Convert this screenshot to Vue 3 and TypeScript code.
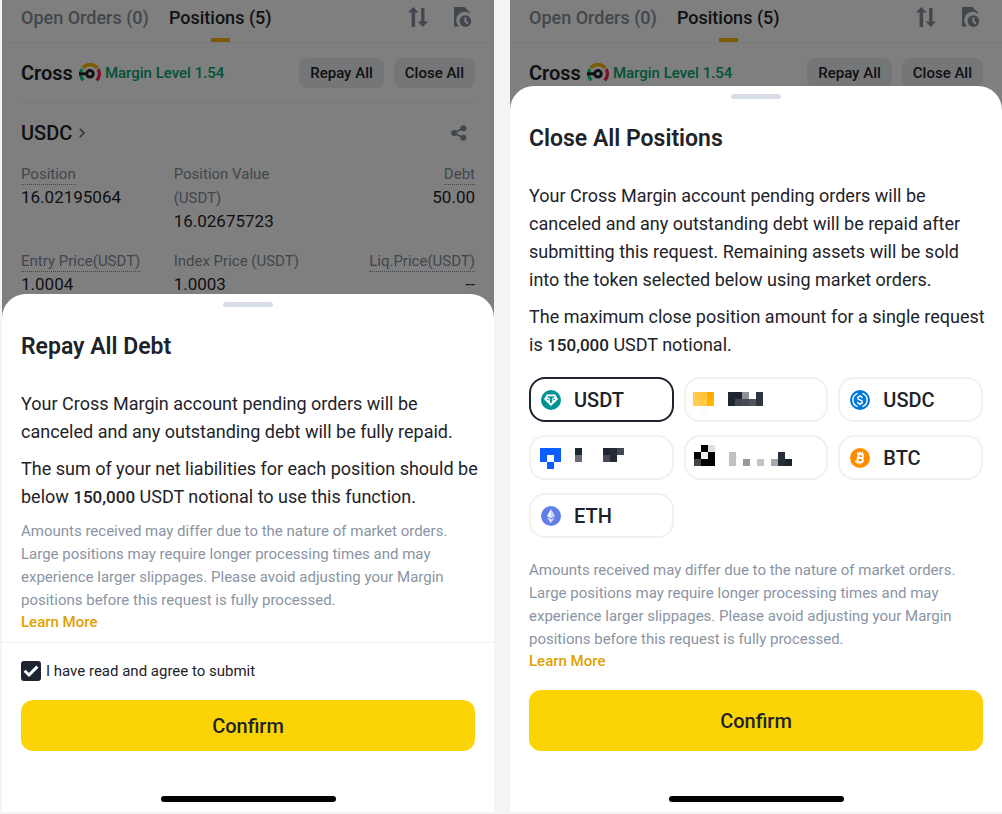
<script setup lang="ts">
import { ref } from 'vue'

type Cell = [x: number, y: number, color: string, w?: number, h?: number]
interface Token {
  id: string
  label: string
  cells?: Cell[]
}
interface Metric {
  label: string
  value: string
  dotted?: boolean
}
interface Sheet {
  kind: 'repay' | 'close'
  title: string
  body: string[][]
}

const metrics: Metric[] = [
  { label: 'Position', value: '16.02195064', dotted: true },
  { label: 'Position Value\n(USDT)', value: '16.02675723' },
  { label: 'Debt', value: '50.00', dotted: true },
  { label: 'Entry Price(USDT)', value: '1.0004', dotted: true },
  { label: 'Index Price (USDT)', value: '1.0003' },
  { label: 'Liq.Price(USDT)', value: '--', dotted: true },
]

// Each body entry is a paragraph, split as [before, amount, after].
const sheets: Sheet[] = [
  {
    kind: 'repay',
    title: 'Repay All Debt',
    body: [
      ['Your Cross Margin account pending orders will be\ncanceled and any outstanding debt will be fully repaid.'],
      ['The sum of your net liabilities for each position should be\nbelow ', '150,000', ' USDT notional to use this function.'],
    ],
  },
  {
    kind: 'close',
    title: 'Close All Positions',
    body: [
      ['Your Cross Margin account pending orders will be\ncanceled and any outstanding debt will be repaid after\nsubmitting this request. Remaining assets will be sold\ninto the token selected below using market orders.'],
      ['The maximum close position amount for a single request\nis ', '150,000', ' USDT notional.'],
    ],
  },
]

const note =
  'Amounts received may differ due to the nature of market orders.\nLarge positions may require longer processing times and may\nexperience larger slippages. Please avoid adjusting your Margin\npositions before this request is fully processed.'

const tokens: Token[] = [
  { id: 'usdt', label: 'USDT' },
  {
    id: 'masked-1',
    label: '',
    cells: [
      [1, 12, '#ffca4b'], [8, 12, '#ffc33c'], [15, 12, '#ffad00'],
      [1, 19, '#ffcd50'], [8, 19, '#ffc946'], [15, 19, '#ffb700'], [8, 26, '#fdfcfa'],
      [36, 12, '#1e2530', 14], [50, 12, '#8f9297'], [64, 12, '#2c333e'],
      [36, 19, '#1e2530'], [43, 19, '#414650'], [50, 19, '#474c54'], [57, 19, '#50545b'], [64, 19, '#2f3640'],
    ],
  },
  { id: 'usdc', label: 'USDC' },
  {
    id: 'masked-2',
    label: '',
    cells: [
      [3, 10, '#0b5fff', 21], [3, 17, '#0b5fff'], [17, 17, '#0b5fff'], [10, 24, '#0b5fff'],
      [38, 10, '#1e2530'], [38, 17, '#666b74'],
      [66, 10, '#1e2530'], [73, 10, '#252c36'], [80, 10, '#434852'],
      [66, 17, '#444953'], [73, 17, '#232a35'],
    ],
  },
  {
    id: 'masked-3',
    label: '',
    cells: [
      [9, 7, '#000'], [16, 7, '#dedfe3'],
      [2, 14, '#000'], [9, 14, '#ececee'], [16, 14, '#000'],
      [2, 21, '#434343'], [9, 21, '#000', 14],
      [37, 14, '#c1c1c5', 7, 14], [51, 21, '#97999d'], [65, 21, '#c3c4c8'], [79, 21, '#a5a8ad'],
      [86, 14, '#262d38', 7, 14], [93, 14, '#fcfcfc'], [93, 21, '#1d2430'],
    ],
  },
  { id: 'btc', label: 'BTC' },
  { id: 'eth', label: 'ETH' },
]

const agreed = ref(true)
const selected = ref('usdt')
</script>

<template>
  <main class="board">
    <section v-for="sheet in sheets" :key="sheet.kind" class="phone">
      <div class="screen">
        <header class="topbar">
          <nav class="tabs">
            <button type="button" class="tab">Open Orders (0)</button>
            <button type="button" class="tab active">Positions (5)</button>
          </nav>
          <div class="tools">
            <button type="button" class="icon-btn" aria-label="Sort">
              <svg width="20" height="20" viewBox="0 0 20 20" fill="currentColor">
                <path d="M5.3 0 10.6 5.4H7.1V20H3.6V5.4H0zM13.2 1h3.3v13.6H20L14.8 20 9.6 14.6h3.6z" />
              </svg>
            </button>
            <button type="button" class="icon-btn" aria-label="Order history">
              <svg width="18" height="20" viewBox="0 0 18 20" fill="currentColor">
                <path d="M0 0h10.4L16 5.6v1.2A7.2 7.2 0 0 0 5.2 19.6H0z" />
                <path fill-rule="evenodd" d="M11.4 8.2a5.9 5.9 0 1 1 0 11.8 5.9 5.9 0 0 1 0-11.8zM10.4 10.6v4.1l2.9 2.7 1.3-1.4-2.2-2.1v-3.3z" />
              </svg>
            </button>
          </div>
        </header>

        <div class="account">
          <strong class="mode">Cross</strong>
          <svg class="gauge" width="22" height="19" viewBox="0 0 22 19" fill="none" stroke-width="3.4">
            <path d="M4.4 17.4A9.3 9.3 0 0 1 2.9 6.2" stroke="#0ecb81" />
            <path d="M3.7 5.1A9.3 9.3 0 0 1 18.3 5.1" stroke="#fcb500" />
            <path d="M19.1 6.2A9.3 9.3 0 0 1 17.6 17.4" stroke="#f6254f" />
            <path d="M0 10.8h8" stroke="#1e2329" stroke-width="3" />
            <circle cx="11" cy="10.8" r="3.3" stroke="#1e2329" stroke-width="3" />
          </svg>
          <span class="level">Margin Level 1.54</span>
          <button type="button" class="pill">Repay All</button>
          <button type="button" class="pill">Close All</button>
        </div>

        <div class="asset">
          <button type="button" class="asset-name">
            USDC
            <svg width="6" height="10" viewBox="0 0 6 10" fill="none" stroke="#707a8a" stroke-width="1.8"><path d="M.8.8 5 5 .8 9.2" /></svg>
          </button>
          <button type="button" class="icon-btn" aria-label="Share">
            <svg width="16" height="16" viewBox="0 0 16 16" fill="currentColor">
              <path d="M3 8 12.5 3M3 8l9.5 5" stroke="currentColor" stroke-width="1.8" />
              <circle cx="3.2" cy="8" r="3" /><circle cx="12.4" cy="3.3" r="3" /><circle cx="12.4" cy="12.7" r="3" />
            </svg>
          </button>
        </div>

        <dl v-if="sheet.kind === 'repay'" class="metrics">
          <div v-for="m in metrics" :key="m.label" class="metric">
            <dt><span :class="{ dotted: m.dotted }">{{ m.label }}</span></dt>
            <dd>{{ m.value }}</dd>
          </div>
        </dl>
      </div>

      <div class="scrim"></div>

      <div class="sheet" role="dialog" :aria-label="sheet.title">
        <span class="handle"></span>
        <h2>{{ sheet.title }}</h2>
        <p v-for="(parts, i) in sheet.body" :key="i" class="copy">{{ parts[0] }}<b v-if="parts[1]">{{ parts[1] }}</b>{{ parts[2] }}</p>

        <fieldset v-if="sheet.kind === 'close'" class="tokens" aria-label="Token">
          <label v-for="t in tokens" :key="t.id" class="token" :class="{ on: selected === t.id, masked: t.cells }">
            <input v-model="selected" type="radio" name="token" :value="t.id" :aria-label="t.label || 'Hidden token'" />
            <svg v-if="t.cells" width="112" height="40" viewBox="0 0 112 40" shape-rendering="crispEdges">
              <rect v-for="(c, i) in t.cells" :key="i" :x="c[0]" :y="c[1]" :fill="c[2]" :width="c[3] ?? 7" :height="c[4] ?? 7" />
            </svg>
            <svg v-else-if="t.id === 'usdt'" width="20" height="20" viewBox="0 0 20 20">
              <circle cx="10" cy="10" r="10" fill="#009393" />
              <path d="M5.8 4.6h8.4L17 9.2l-7 6.9L3 9.2z" fill="#fff" />
              <path d="M6.8 6.2h6.4v1.6h-2.3v.8c2 .1 3.2.5 3.2.9s-1.2.8-3.2.9v2.7H9.1v-2.7c-2-.1-3.2-.5-3.2-.9s1.2-.8 3.2-.9v-.8H6.8z" fill="#009393" />
              <path d="M6.8 9.5c1.5-.6 4.900-.6 6.400 0-1.500.5-4.900.5-6.400 0z" fill="#fff" />
              <path d="M9.100 7.500h1.800v2.600H9.100z" fill="#009393" />
            </svg>
            <svg v-else-if="t.id === 'usdc'" width="20" height="20" viewBox="0 0 20 20" fill="none" stroke="#fff">
              <circle cx="10" cy="10" r="10" fill="#0078d6" stroke="none" />
              <path d="M7.6 3.4a7 7 0 0 0 0 13.2M12.4 3.4a7 7 0 0 1 0 13.2" stroke-width="1.4" />
              <path d="M12.3 8.1c-.1-1.1-1-1.7-2.3-1.7s-2.3.6-2.3 1.7c0 2.6 4.7 1.2 4.7 3.8 0 1.1-1 1.8-2.4 1.8s-2.4-.7-2.5-1.9M10 4.9v1.6M10 13.6v1.6" stroke-width="1.4" />
            </svg>
            <svg v-else-if="t.id === 'btc'" width="20" height="20" viewBox="0 0 20 20" fill="none" stroke="#fff">
              <circle cx="10" cy="10" r="10" fill="#ff8d00" stroke="none" />
              <g transform="rotate(13 10 10)" stroke-width="1.9">
                <path d="M6 6h4.800a1.900 1.900 0 0 1 0 3.900H8M10.500 9.900h.8a2.100 2.100 0 0 1 0 4.200H6M8 6v8" />
                <path d="M8.800 3.600V6M11.200 3.600V6M8.800 14v2.400M11.200 14v2.400" stroke-width="1.3" />
              </g>
            </svg>
            <svg v-else width="20" height="20" viewBox="0 0 20 20">
              <circle cx="10" cy="10" r="10" fill="#627eea" />
              <path d="M10 3 5.9 10.1 10 12.4z" fill="#f0f2fd" />
              <path d="M10 3l4.1 7.1L10 12.4z" fill="#cbd4f8" />
              <path d="M5.9 11.3 10 17v-3.4z" fill="#f0f2fd" />
              <path d="M14.1 11.3 10 17v-3.4z" fill="#cbd4f8" />
            </svg>
            <span v-if="t.label">{{ t.label }}</span>
          </label>
        </fieldset>

        <p class="note">{{ note }}</p>
        <a href="#" class="more">Learn More</a>

        <label v-if="sheet.kind === 'repay'" class="agree">
          <span class="box">
            <input v-model="agreed" type="checkbox" />
            <svg v-if="agreed" width="20" height="20" viewBox="0 0 20 20" fill="none" stroke="#fff" stroke-width="3"><path d="M3.6 9.7 8 14l8.4-8.4" /></svg>
          </span>
          I have read and agree to submit
        </label>

        <button type="button" class="confirm" :class="sheet.kind">Confirm</button>
        <span class="home"></span>
      </div>
    </section>
  </main>
</template>

<style>
body {
  margin: 0;
  background: #f4f4f4;
}
</style>

<style scoped>
.board {
  box-sizing: border-box;
  display: grid;
  grid-template-columns: 1fr 1fr;
  gap: 16px;
  min-height: 100vh;
  padding: 0 0 2px 2px;
  font-family: Roboto, "Liberation Sans", sans-serif;
  color: #1e2329;
}
button {
  padding: 0;
  border: 0;
  background: none;
  color: inherit;
  font: inherit;
  cursor: pointer;
}
svg {
  display: block;
  flex: none;
}
.phone {
  display: grid;
  background: #fff;
}
.screen,
.scrim,
.sheet {
  grid-area: 1 / 1;
  min-width: 0;
}
.scrim {
  background: rgba(0, 0, 0, 0.5);
}

.topbar {
  display: flex;
  justify-content: space-between;
  padding: 0 22px 0 19px;
  border-bottom: 1px solid #f0f1f3;
}
.tabs {
  display: flex;
  gap: 20px;
}
.tab {
  display: flex;
  flex-direction: column;
  align-items: center;
  height: 42px;
  font-size: 18px;
  font-weight: 500;
  line-height: 36px;
  color: #848e9c;
}
.tab.active {
  color: #1e2329;
}
.tab.active::after {
  content: "";
  width: 19px;
  height: 4px;
  margin-top: 2px;
  background: #fcb500;
}
.tools {
  display: flex;
  gap: 26px;
  height: 34px;
}
.icon-btn {
  color: #848e9c;
}

.account {
  display: flex;
  align-items: center;
  height: 59px;
  margin: 0 19px;
  border-bottom: 1px solid #f0f1f3;
}
.mode {
  font-size: 20px;
  font-weight: 600;
}
.gauge {
  margin: 0 4px 0 6px;
}
.level {
  margin-right: auto;
  font-size: 15px;
  font-weight: 500;
  color: #03a66d;
}
.pill {
  height: 30px;
  margin-left: 10px;
  padding: 0 11px;
  border-radius: 8px;
  background: #eaecef;
  font-size: 15px;
  font-weight: 500;
}
.asset {
  display: flex;
  justify-content: space-between;
  align-items: center;
  height: 59px;
  padding: 0 27px 0 19px;
}
.asset-name {
  display: flex;
  align-items: center;
  gap: 7px;
  font-size: 20px;
  font-weight: 500;
}
.metrics {
  display: grid;
  grid-template-columns: repeat(3, 1fr);
  gap: 17px 4px;
  margin: 0;
  padding: 0 19px;
}
.metric:nth-child(3n) {
  text-align: right;
}
dt {
  font-size: 15px;
  line-height: 24px;
  white-space: pre-line;
  color: #848e9c;
}
.dotted {
  display: block;
  width: fit-content;
  margin: 2px 0 1px;
  border-bottom: 1px dotted #848e9c;
  line-height: 20px;
}
.metric:nth-child(3n) .dotted {
  margin-left: auto;
}
dd {
  margin: 0;
  font-size: 17px;
  line-height: 22px;
}

.sheet {
  position: relative;
  align-self: end;
  display: flex;
  flex-direction: column;
  padding: 8px 19px 10px;
  border-radius: 24px 24px 0 0;
  background: #fff;
}
.handle {
  align-self: center;
  width: 50px;
  height: 5px;
  border-radius: 3px;
  background: #d8dce4;
}
h2 {
  margin: 26px 0 29px;
  font-size: 23px;
  font-weight: 600;
  line-height: 28px;
}
.copy {
  margin: 0 -16px 9px 0;
  font-size: 18px;
  line-height: 28px;
  white-space: pre-line;
}
.copy b {
  font-size: 17px;
  font-weight: 500;
}
.tokens {
  display: grid;
  grid-template-columns: repeat(3, 1fr);
  gap: 13px 10px;
  min-width: 0;
  margin: 9px 0 21px;
  padding: 0;
  border: 0;
}
.token {
  position: relative;
  box-sizing: border-box;
  display: flex;
  align-items: center;
  gap: 13px;
  height: 45px;
  padding: 0 10px;
  border: 2px solid #f1f1f2;
  border-radius: 16px;
  font-size: 20px;
  font-weight: 500;
  cursor: pointer;
}
.token.on {
  border-color: #1e2530;
}
.token.masked {
  padding: 0 6px;
}
.token input {
  position: absolute;
  inset: 0;
  margin: 0;
  opacity: 0;
  cursor: pointer;
}
.note {
  margin: 0;
  font-size: 15px;
  line-height: 23px;
  white-space: pre-line;
  color: #8a94a3;
}
.more {
  align-self: flex-start;
  font-size: 15px;
  font-weight: 500;
  line-height: 20px;
  text-decoration: none;
  color: #e0a000;
}
.agree {
  display: flex;
  align-items: center;
  gap: 5px;
  margin: 10px -19px 0;
  padding: 18px 19px 0;
  border-top: 1px solid #eeeff1;
  font-size: 15px;
  line-height: 20px;
}
.box {
  display: grid;
}
.box > * {
  grid-area: 1 / 1;
}
.box svg {
  pointer-events: none;
}
.box input {
  width: 20px;
  height: 20px;
  margin: 0;
  border-radius: 3px;
  background: #1e2530;
  appearance: none;
}
.confirm {
  height: 51px;
  margin: 19px 0 45px;
  border-radius: 12px;
  background: #fcd405;
  font-size: 20px;
  font-weight: 500;
}
.confirm.close {
  height: 61px;
}
.home {
  align-self: center;
  width: 175px;
  height: 6px;
  border-radius: 3px;
  background: #000;
}
</style>
